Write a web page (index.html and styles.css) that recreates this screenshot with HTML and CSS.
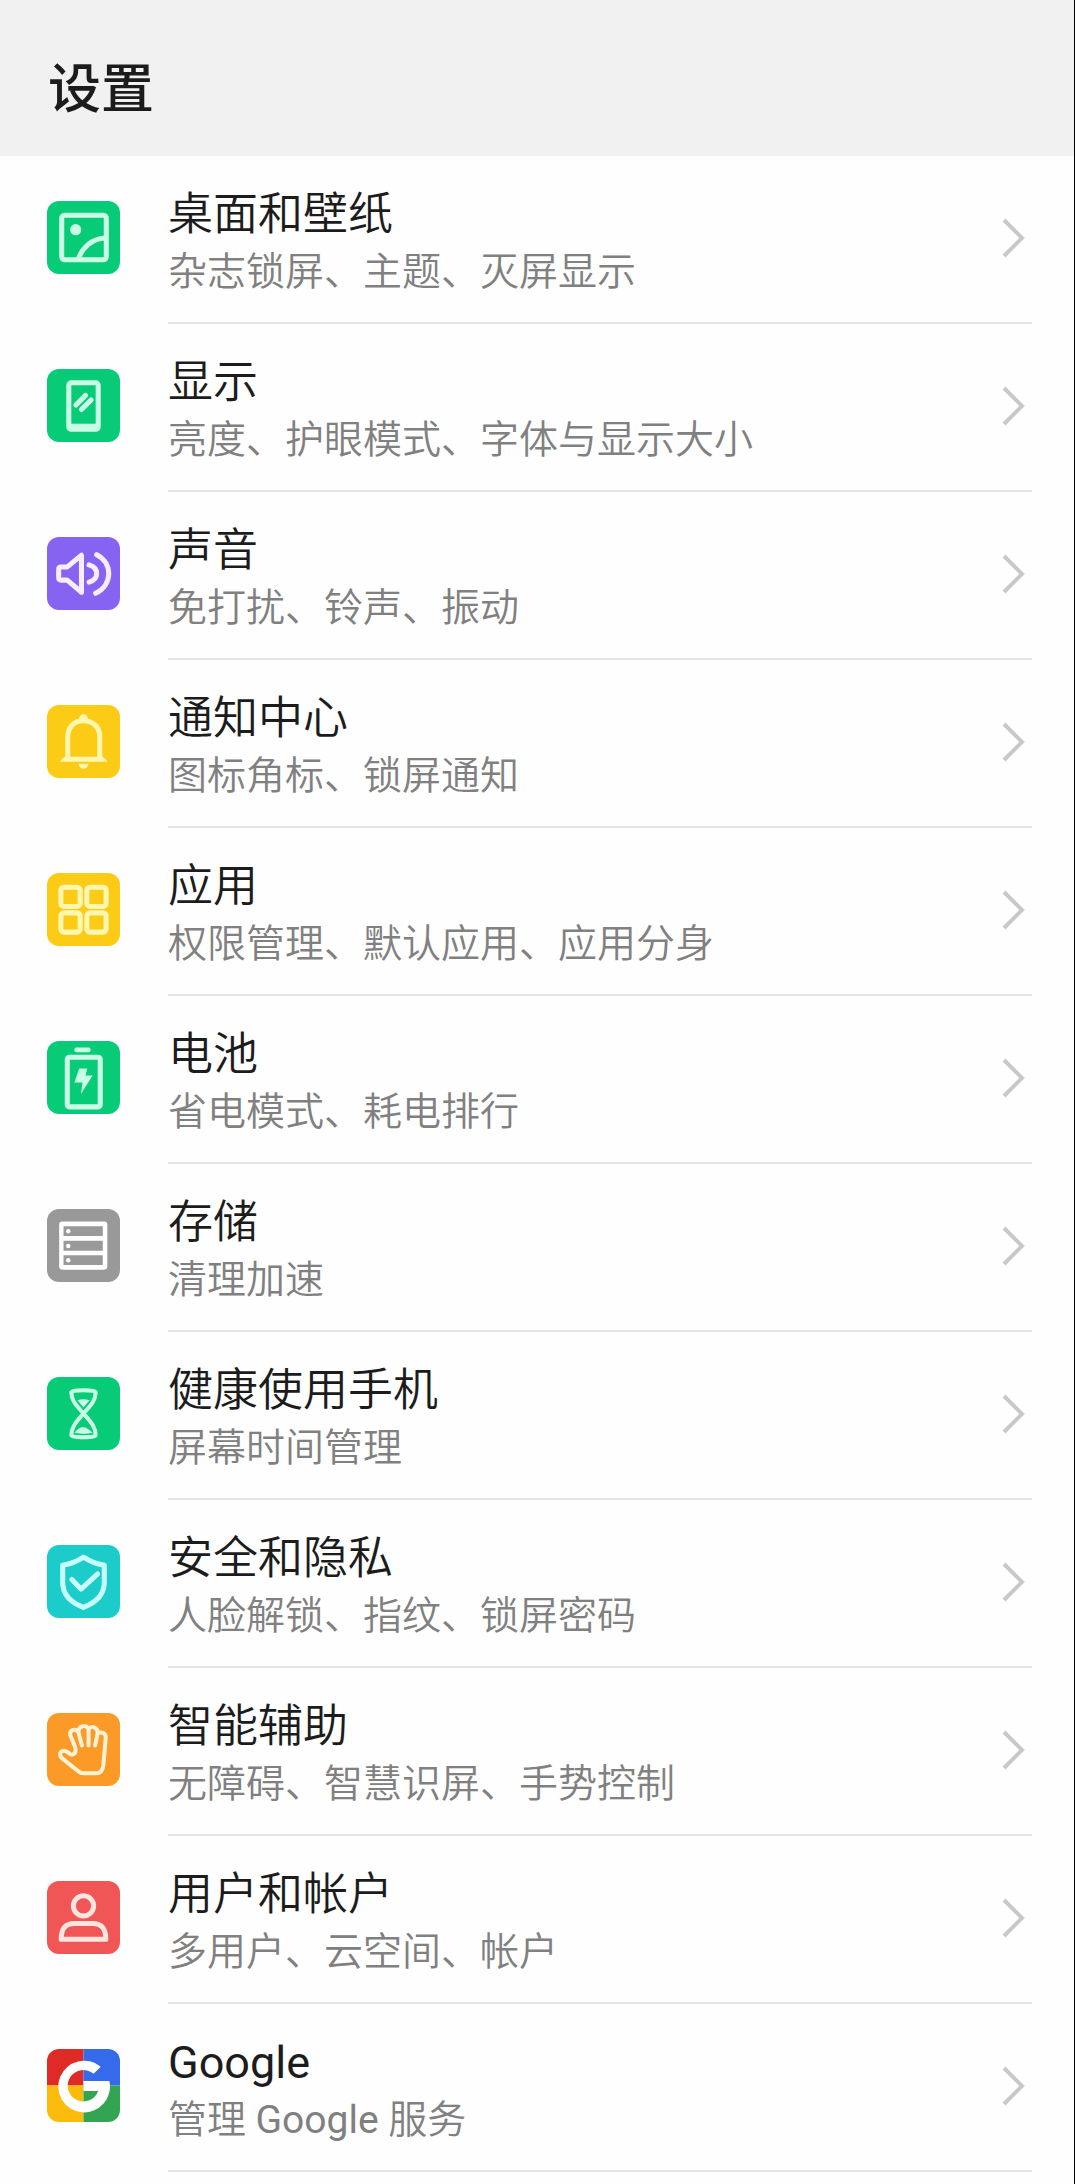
FILE: index.html
```html
<!DOCTYPE html>
<html lang="zh-CN">

<head>
    <meta charset="UTF-8">
    <meta name="viewport" content="width=device-width, initial-scale=1.0">
    <title>设置</title>
    <link rel="stylesheet" href="styles.css">
</head>

<body>
    <header class="header">
        <h1>设置</h1>
    </header>

    <ul class="settings">
        <li>
            <a class="item" href="#wallpaper">
                <svg class="icon green" viewBox="0 0 72 72">
                    <rect x="14.5" y="14" width="44" height="44" rx="3" />
                    <circle class="solid" cx="28.3" cy="28.3" r="5.5" />
                    <path d="M31 57C35 46 44 37 58 36.5" />
                </svg>
                <span class="content">
                    <span class="text">
                        <span class="name">桌面和壁纸</span>
                        <span class="desc">杂志锁屏、主题、灭屏显示</span>
                    </span>
                    <svg class="arrow" viewBox="0 0 24 40"><path d="M2 2l18 18L2 38" /></svg>
                </span>
            </a>
        </li>
        <li>
            <a class="item" href="#display">
                <svg class="icon green" viewBox="0 0 72 72">
                    <path class="solid" fill-rule="evenodd" d="M24 11h24a5 5 0 0 1 5 5v41a5 5 0 0 1-5 5H24a5 5 0 0 1-5-5V16a5 5 0 0 1 5-5zM24 16v38h24V16z" />
                    <path d="M28.5 35.5l9.5-9.5M34 40l9.5-9.5" />
                </svg>
                <span class="content">
                    <span class="text">
                        <span class="name">显示</span>
                        <span class="desc">亮度、护眼模式、字体与显示大小</span>
                    </span>
                    <svg class="arrow" viewBox="0 0 24 40"><path d="M2 2l18 18L2 38" /></svg>
                </span>
            </a>
        </li>
        <li>
            <a class="item" href="#sound">
                <svg class="icon purple" viewBox="0 0 72 72">
                    <path d="M14 29.5h6L34 18v36.5L20 42.5h-6q-2.5 0-2.5-2.5v-8q0-2.5 2.5-2.5z" />
                    <path d="M41.5 27.5c10 3 10 14 0 17M49 17.5c16 8 16 30-1 38" />
                </svg>
                <span class="content">
                    <span class="text">
                        <span class="name">声音</span>
                        <span class="desc">免打扰、铃声、振动</span>
                    </span>
                    <svg class="arrow" viewBox="0 0 24 40"><path d="M2 2l18 18L2 38" /></svg>
                </span>
            </a>
        </li>
        <li>
            <a class="item" href="#notification">
                <svg class="icon yellow" viewBox="0 0 72 72">
                    <path d="M20.5 52V31c0-9 6-15.500 15.500-15.500S52 22 52 31v21" />
                    <path class="solid" d="M31.500 15a4 5.500 0 0 1 9 0zM13 56q0-2 5-5h36.500q5 3 5 5zM31 58h10q-1 5-5 5t-5-5z" />
                </svg>
                <span class="content">
                    <span class="text">
                        <span class="name">通知中心</span>
                        <span class="desc">图标角标、锁屏通知</span>
                    </span>
                    <svg class="arrow" viewBox="0 0 24 40"><path d="M2 2l18 18L2 38" /></svg>
                </span>
            </a>
        </li>
        <li>
            <a class="item" href="#apps">
                <svg class="icon yellow" viewBox="0 0 72 72">
                    <rect x="13.7" y="14" width="19" height="19" rx="3" />
                    <rect x="39.3" y="14" width="19" height="19" rx="3" />
                    <rect x="13.7" y="39.3" width="19" height="19" rx="3" />
                    <rect x="39.3" y="39.3" width="19" height="19" rx="3" />
                </svg>
                <span class="content">
                    <span class="text">
                        <span class="name">应用</span>
                        <span class="desc">权限管理、默认应用、应用分身</span>
                    </span>
                    <svg class="arrow" viewBox="0 0 24 40"><path d="M2 2l18 18L2 38" /></svg>
                </span>
            </a>
        </li>
        <li>
            <a class="item" href="#battery">
                <svg class="icon green" viewBox="0 0 72 72">
                    <rect class="solid" x="27" y="6.3" width="16" height="4.7" rx="2" />
                    <rect x="20" y="16" width="32.5" height="49" rx="2" />
                    <path class="solid" d="M31.7 27h8L38 34h7L33.5 52.3 35 41h-8z" />
                </svg>
                <span class="content">
                    <span class="text">
                        <span class="name">电池</span>
                        <span class="desc">省电模式、耗电排行</span>
                    </span>
                    <svg class="arrow" viewBox="0 0 24 40"><path d="M2 2l18 18L2 38" /></svg>
                </span>
            </a>
        </li>
        <li>
            <a class="item" href="#storage">
                <svg class="icon gray" viewBox="0 0 72 72">
                    <path class="solid" fill-rule="evenodd" d="M15 12.3h41.500q3 0 3 3v41.500q0 3-3 3H15q-3 0-3-3V15.300q0-3 3-3zM16.300 17v9.700H55V17zM16.300 31.300v10H55v-10zM16.300 45.700v9.600H55v-9.600z" />
                    <circle class="solid" cx="21" cy="22" r="2.2" />
                    <circle class="solid" cx="21" cy="36.5" r="2.2" />
                    <circle class="solid" cx="21" cy="50.5" r="2.2" />
                </svg>
                <span class="content">
                    <span class="text">
                        <span class="name">存储</span>
                        <span class="desc">清理加速</span>
                    </span>
                    <svg class="arrow" viewBox="0 0 24 40"><path d="M2 2l18 18L2 38" /></svg>
                </span>
            </a>
        </li>
        <li>
            <a class="item" href="#health">
                <svg class="icon green" viewBox="0 0 72 72">
                    <path class="thin" d="M24 15q0-2 12-2t12 2c0 9-6 14-12 21-6-7-12-12-12-21zM24 57.500c0-9 6-14.500 12-21.500 6 7 12 12.500 12 21.500q0 2-12 2t-12-2z" />
                    <path class="solid" d="M30 23q6-2 12 0l-6 7zM27 55q8-11 18 0-9 2-18 0z" />
                </svg>
                <span class="content">
                    <span class="text">
                        <span class="name">健康使用手机</span>
                        <span class="desc">屏幕时间管理</span>
                    </span>
                    <svg class="arrow" viewBox="0 0 24 40"><path d="M2 2l18 18L2 38" /></svg>
                </span>
            </a>
        </li>
        <li>
            <a class="item" href="#security">
                <svg class="icon cyan" viewBox="0 0 72 72">
                    <path d="M36 12q9 6 20.500 8v17c0 12-9 20-20.500 24.500C24 57 15.500 49 15.500 37V20Q27 18 36 12z" />
                    <path d="M24.500 34l9 9.500L50 28.500" />
                </svg>
                <span class="content">
                    <span class="text">
                        <span class="name">安全和隐私</span>
                        <span class="desc">人脸解锁、指纹、锁屏密码</span>
                    </span>
                    <svg class="arrow" viewBox="0 0 24 40"><path d="M2 2l18 18L2 38" /></svg>
                </span>
            </a>
        </li>
        <li>
            <a class="item" href="#assist">
                <svg class="icon orange" viewBox="0 0 72 72">
                    <path class="thin" d="M27.500 39.500c1.500-3 .5-6-1-9L23 22c-1.500-5 5-7.500 8-3 0-7 8-8 10-3 3-4 9-2 9 4 4-2 8 0 8 4l-2.500 28q-1 7.500-7 7.500H36q-3 0-5-2L14 44c-3-5 1-8 5-6 4 1 4 6 8.500 1.500M31 19l3.500 13M41 16v16M50 20l-2.500 12" />
                </svg>
                <span class="content">
                    <span class="text">
                        <span class="name">智能辅助</span>
                        <span class="desc">无障碍、智慧识屏、手势控制</span>
                    </span>
                    <svg class="arrow" viewBox="0 0 24 40"><path d="M2 2l18 18L2 38" /></svg>
                </span>
            </a>
        </li>
        <li>
            <a class="item" href="#account">
                <svg class="icon red" viewBox="0 0 72 72">
                    <circle cx="36" cy="24.5" r="10" />
                    <path d="M27 42h18c9 0 13 5 13 15.500H14C14 47 18 42 27 42z" />
                </svg>
                <span class="content">
                    <span class="text">
                        <span class="name">用户和帐户</span>
                        <span class="desc">多用户、云空间、帐户</span>
                    </span>
                    <svg class="arrow" viewBox="0 0 24 40"><path d="M2 2l18 18L2 38" /></svg>
                </span>
            </a>
        </li>
        <li>
            <a class="item" href="#google">
                <svg class="icon google" viewBox="0 0 72 72">
                    <path class="g-red" d="M0 0h36v36H0z" />
                    <path class="g-blue" d="M36 0h36v36H36z" />
                    <path class="g-yellow" d="M0 36h36v36H0z" />
                    <path class="g-green" d="M36 36h36v36H36z" />
                    <path class="solid" d="M53 17.5A25.500 25.500 0 1 0 61.500 31.500H36v10h14.500a15.500 15.500 0 1 1-4.500-17z" />
                </svg>
                <span class="content">
                    <span class="text">
                        <span class="name latin">Google</span>
                        <span class="desc">管理 <span class="latin">Google</span> 服务</span>
                    </span>
                    <svg class="arrow" viewBox="0 0 24 40"><path d="M2 2l18 18L2 38" /></svg>
                </span>
            </a>
        </li>
    </ul>
</body>

</html>
```
FILE: styles.css
```css
* {
    box-sizing: border-box;
}

body {
    margin: 0;
    min-height: 100vh;
    background-color: #fefefe;
    border-right: 1px solid #000;
    font-family: Roboto, "Noto Sans CJK SC", sans-serif;
}

.header {
    height: 156px;
    padding: 14px 48px 0;
    display: flex;
    align-items: center;
    background-color: #f1f1f1;
}

h1 {
    margin: 0;
    font-size: 53px;
    font-weight: 500;
    color: #1c1c1c;
}

.settings {
    list-style-type: none;
    margin: 0;
    padding: 0;
}

.item {
    display: flex;
    align-items: center;
    gap: 48px;
    padding: 0 42px 0 47px;
    color: #1c1c1c;
    text-decoration: none;
}

.icon {
    flex: none;
    width: 73px;
    height: 73px;
    margin-bottom: 5px;
    border-radius: 12px;
    fill: none;
    stroke: #fff;
    stroke-width: 5;
    stroke-linecap: round;
    stroke-linejoin: round;
}

.icon .thin {
    stroke-width: 4;
}

.icon .solid {
    fill: #fff;
    stroke: none;
}

.green {
    background-color: #08cb78;
    stroke: #c9fde6;
}

.green .solid {
    fill: #c9fde6;
}

.purple {
    background-color: #8763f2;
    stroke: #f6edff;
}

.yellow {
    background-color: #fccb15;
    stroke: #fff6b0;
}

.yellow .solid {
    fill: #fff6b0;
}

.gray {
    background-color: #999;
}

.cyan {
    background-color: #1cccca;
    stroke: #c8fffc;
}

.orange {
    background-color: #fc9a27;
    stroke: #fff1d4;
}

.red {
    background-color: #f05656;
    stroke: #ffe4e0;
}

.google path {
    stroke: none;
}

.g-red {
    fill: #de2b26;
}

.g-blue {
    fill: #356bea;
}

.g-yellow {
    fill: #fbbb0a;
}

.g-green {
    fill: #31a551;
}

.content {
    flex: 1;
    display: flex;
    align-items: center;
    justify-content: space-between;
    height: 168px;
    padding-right: 6px;
    border-bottom: 2px solid #e4e4e4;
}

.text {
    display: flex;
    flex-direction: column;
    padding-top: 8px;
}

.name {
    font-size: 45px;
    font-weight: 350;
    line-height: 58px;
}

.desc {
    font-size: 39px;
    font-weight: 350;
    line-height: 56px;
    color: #808080;
}

.latin {
    font-weight: 400;
}

.arrow {
    width: 24px;
    height: 40px;
    margin-bottom: 2px;
    fill: none;
    stroke: #c8c8c8;
    stroke-width: 4;
}
```
